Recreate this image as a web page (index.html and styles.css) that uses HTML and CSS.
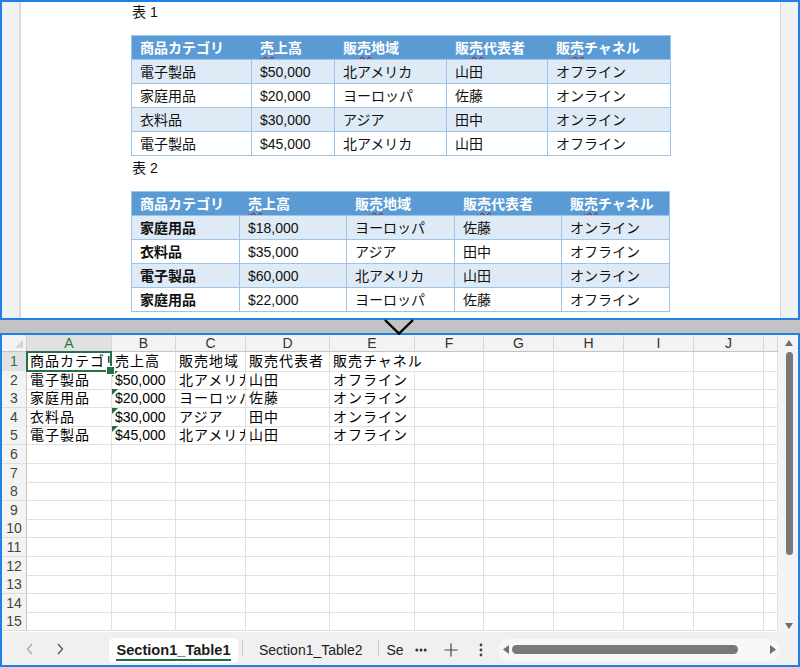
FILE: index.html
```html
<!DOCTYPE html>
<html lang="ja">
<head>
<meta charset="utf-8">
<title>表</title>
<link rel="stylesheet" href="styles.css">
</head>
<body>
<div class="app">
  <section class="doc-pane">
    <div class="gutter"></div>
    <div class="page">
      <p class="caption first">表 1</p>
      <table class="doc-table">
        <colgroup><col class="w120"><col class="w83"><col class="w112"><col class="w101"><col class="w122"></colgroup>
        <thead>
          <tr><th>商品カテゴリ</th><th><span class="sq">売</span>上高</th><th>販<span class="sq">売</span>地域</th><th>販<span class="sq">売</span>代表者</th><th>販<span class="sq">売</span>チャネル</th></tr>
        </thead>
        <tbody>
          <tr class="band"><td>電子製品</td><td>$50,000</td><td>北アメリカ</td><td>山田</td><td>オフライン</td></tr>
          <tr><td>家庭用品</td><td>$20,000</td><td>ヨーロッパ</td><td>佐藤</td><td>オンライン</td></tr>
          <tr class="band"><td>衣料品</td><td>$30,000</td><td>アジア</td><td>田中</td><td>オンライン</td></tr>
          <tr><td>電子製品</td><td>$45,000</td><td>北アメリカ</td><td>山田</td><td>オフライン</td></tr>
        </tbody>
      </table>
      <p class="caption">表 2</p>
      <table class="doc-table bold-first">
        <colgroup><col class="w108"><col class="w107"><col class="w108"><col class="w107"><col class="w107"></colgroup>
        <thead>
          <tr><th>商品カテゴリ</th><th><span class="sq">売</span>上高</th><th>販<span class="sq">売</span>地域</th><th>販<span class="sq">売</span>代表者</th><th>販<span class="sq">売</span>チャネル</th></tr>
        </thead>
        <tbody>
          <tr class="band"><td>家庭用品</td><td>$18,000</td><td>ヨーロッパ</td><td>佐藤</td><td>オンライン</td></tr>
          <tr><td>衣料品</td><td>$35,000</td><td>アジア</td><td>田中</td><td>オフライン</td></tr>
          <tr class="band"><td>電子製品</td><td>$60,000</td><td>北アメリカ</td><td>山田</td><td>オンライン</td></tr>
          <tr><td>家庭用品</td><td>$22,000</td><td>ヨーロッパ</td><td>佐藤</td><td>オフライン</td></tr>
        </tbody>
      </table>
    </div>
    <div class="rail"></div>
  </section>

  <div class="splitter">
    <svg class="chevron" width="32" height="18" viewBox="0 0 32 18"><path d="M2 2 L16 15.5 L30 2" fill="none" stroke="#000" stroke-width="2.4"/></svg>
  </div>

  <section class="sheet-pane">
    <div class="sheet-body">
      <div class="grid">
        <div class="row head">
          <div class="corner"></div>
          <div class="ch sel">A</div><div class="ch">B</div><div class="ch">C</div><div class="ch">D</div><div class="ch">E</div><div class="ch">F</div><div class="ch">G</div><div class="ch">H</div><div class="ch">I</div><div class="ch">J</div><div class="ch"></div>
        </div>
        <div class="row">
          <div class="rh sel">1</div>
          <div class="c a1 jp"><span class="clip">商品カテゴリ</span></div><div class="c jp">売上高</div><div class="c jp">販売地域</div><div class="c jp">販売代表者</div><div class="c jp over">販売チャネル</div><div class="c"></div><div class="c"></div><div class="c"></div><div class="c"></div><div class="c"></div><div class="c"></div>
        </div>
        <div class="row">
          <div class="rh">2</div>
          <div class="c jp">電子製品</div><div class="c num">$50,000</div><div class="c jp">北アメリカ</div><div class="c jp">山田</div><div class="c jp">オフライン</div><div class="c"></div><div class="c"></div><div class="c"></div><div class="c"></div><div class="c"></div><div class="c"></div>
        </div>
        <div class="row">
          <div class="rh">3</div>
          <div class="c jp">家庭用品</div><div class="c num">$20,000</div><div class="c jp">ヨーロッパ</div><div class="c jp">佐藤</div><div class="c jp">オンライン</div><div class="c"></div><div class="c"></div><div class="c"></div><div class="c"></div><div class="c"></div><div class="c"></div>
        </div>
        <div class="row">
          <div class="rh">4</div>
          <div class="c jp">衣料品</div><div class="c num">$30,000</div><div class="c jp">アジア</div><div class="c jp">田中</div><div class="c jp">オンライン</div><div class="c"></div><div class="c"></div><div class="c"></div><div class="c"></div><div class="c"></div><div class="c"></div>
        </div>
        <div class="row">
          <div class="rh">5</div>
          <div class="c jp">電子製品</div><div class="c num">$45,000</div><div class="c jp">北アメリカ</div><div class="c jp">山田</div><div class="c jp">オフライン</div><div class="c"></div><div class="c"></div><div class="c"></div><div class="c"></div><div class="c"></div><div class="c"></div>
        </div>
        <div class="row"><div class="rh">6</div><div class="c"></div><div class="c"></div><div class="c"></div><div class="c"></div><div class="c"></div><div class="c"></div><div class="c"></div><div class="c"></div><div class="c"></div><div class="c"></div><div class="c"></div></div>
        <div class="row"><div class="rh">7</div><div class="c"></div><div class="c"></div><div class="c"></div><div class="c"></div><div class="c"></div><div class="c"></div><div class="c"></div><div class="c"></div><div class="c"></div><div class="c"></div><div class="c"></div></div>
        <div class="row"><div class="rh">8</div><div class="c"></div><div class="c"></div><div class="c"></div><div class="c"></div><div class="c"></div><div class="c"></div><div class="c"></div><div class="c"></div><div class="c"></div><div class="c"></div><div class="c"></div></div>
        <div class="row"><div class="rh">9</div><div class="c"></div><div class="c"></div><div class="c"></div><div class="c"></div><div class="c"></div><div class="c"></div><div class="c"></div><div class="c"></div><div class="c"></div><div class="c"></div><div class="c"></div></div>
        <div class="row"><div class="rh">10</div><div class="c"></div><div class="c"></div><div class="c"></div><div class="c"></div><div class="c"></div><div class="c"></div><div class="c"></div><div class="c"></div><div class="c"></div><div class="c"></div><div class="c"></div></div>
        <div class="row"><div class="rh">11</div><div class="c"></div><div class="c"></div><div class="c"></div><div class="c"></div><div class="c"></div><div class="c"></div><div class="c"></div><div class="c"></div><div class="c"></div><div class="c"></div><div class="c"></div></div>
        <div class="row"><div class="rh">12</div><div class="c"></div><div class="c"></div><div class="c"></div><div class="c"></div><div class="c"></div><div class="c"></div><div class="c"></div><div class="c"></div><div class="c"></div><div class="c"></div><div class="c"></div></div>
        <div class="row"><div class="rh">13</div><div class="c"></div><div class="c"></div><div class="c"></div><div class="c"></div><div class="c"></div><div class="c"></div><div class="c"></div><div class="c"></div><div class="c"></div><div class="c"></div><div class="c"></div></div>
        <div class="row"><div class="rh">14</div><div class="c"></div><div class="c"></div><div class="c"></div><div class="c"></div><div class="c"></div><div class="c"></div><div class="c"></div><div class="c"></div><div class="c"></div><div class="c"></div><div class="c"></div></div>
        <div class="row"><div class="rh">15</div><div class="c"></div><div class="c"></div><div class="c"></div><div class="c"></div><div class="c"></div><div class="c"></div><div class="c"></div><div class="c"></div><div class="c"></div><div class="c"></div><div class="c"></div></div>
      </div>
      <div class="vscroll">
        <svg class="arrow-up" width="8" height="6" viewBox="0 0 8 6"><path d="M4 0 L8 6 L0 6 Z" fill="#6e6e6e"/></svg>
        <div class="vthumb"></div>
        <svg class="arrow-down" width="8" height="6" viewBox="0 0 8 6"><path d="M0 0 L8 0 L4 6 Z" fill="#6e6e6e"/></svg>
      </div>
    </div>

    <div class="tabbar">
      <div class="nav">
        <svg class="nav-btn" width="8" height="12" viewBox="0 0 8 12"><path d="M6 1 L1.5 6 L6 11" fill="none" stroke="#a8a8a8" stroke-width="1.3"/></svg>
        <svg class="nav-btn" width="8" height="12" viewBox="0 0 8 12"><path d="M2 1 L6.5 6 L2 11" fill="none" stroke="#555" stroke-width="1.3"/></svg>
      </div>
      <div class="tab active"><span class="tab-label">Section1_Table1</span></div>
      <div class="tabs-rest">
        <span class="tab-sep"></span>
        <span class="tab">Section1_Table2</span>
        <span class="tab-sep"></span>
        <span class="tab tab-cut">Section1_Table3</span>
      </div>
      <div class="tool tool-more">
        <svg width="12" height="4" viewBox="0 0 12 4"><circle cx="1.8" cy="2" r="1.5" fill="#333"/><circle cx="6" cy="2" r="1.5" fill="#333"/><circle cx="10.2" cy="2" r="1.5" fill="#333"/></svg>
      </div>
      <div class="tool tool-add">
        <svg width="14" height="14" viewBox="0 0 14 14"><path d="M7 0.5 V13.5 M0.5 7 H13.5" stroke="#444" stroke-width="1.2"/></svg>
      </div>
      <div class="tool tool-menu">
        <svg width="4" height="14" viewBox="0 0 4 14"><circle cx="2" cy="2" r="1.4" fill="#444"/><circle cx="2" cy="7" r="1.4" fill="#444"/><circle cx="2" cy="12" r="1.4" fill="#444"/></svg>
      </div>
      <div class="hscroll">
        <svg width="6" height="9" viewBox="0 0 6 9"><path d="M6 0 L6 9 L0 4.5 Z" fill="#6e6e6e"/></svg>
        <div class="hthumb"></div>
        <svg width="6" height="9" viewBox="0 0 6 9"><path d="M0 0 L6 4.5 L0 9 Z" fill="#6e6e6e"/></svg>
      </div>
    </div>
  </section>
</div>
</body>
</html>
```

FILE: styles.css
```css
* { box-sizing: border-box; }
html, body { margin: 0; padding: 0; }
body {
  width: 800px;
  height: 667px;
  overflow: hidden;
  background: #fff;
  font-family: "Liberation Sans", "Noto Sans CJK JP", sans-serif;
  color: #000;
}
.app { display: flex; flex-direction: column; height: 667px; }

/* ---------- document pane ---------- */
.doc-pane {
  height: 320px;
  flex: none;
  border: 2px solid #1f80e6;
  display: flex;
  overflow: hidden;
}
.gutter { width: 19px; flex: none; background: #f0f0f0; border-right: 2px solid #d9d9d9; }
.page { flex: 1; background: #fff; padding-left: 110px; }
.rail { width: 18px; flex: none; background: #f0f0f0; border-left: 1px solid #d6d6d6; }

.caption {
  margin: 2px 0 0 1px;
  font-size: 14px;
  line-height: 20px;
  color: #111;
}
.caption.first { margin-top: 0; }

.doc-table {
  margin-top: 13px;
  border-collapse: separate;
  border-spacing: 0;
  table-layout: fixed;
  border: 1px solid #9dc3e6;
  font-size: 14px;
}
.doc-table th, .doc-table td {
  padding: 0 0 0 8px;
  text-align: left;
  white-space: nowrap;
  overflow: hidden;
  line-height: 20px;
}
.doc-table th {
  height: 24px;
  background: #5b9bd5;
  color: #fff;
  font-weight: bold;
  border-bottom: 1px solid #9dc3e6;
}
.doc-table td {
  height: 24px;
  border-right: 1px solid #9dc3e6;
  border-bottom: 1px solid #9dc3e6;
  color: #111;
}
.doc-table td:last-child { border-right: none; }
.doc-table tbody tr:last-child td { border-bottom: none; height: 23px; }
.doc-table tr.band td { background: #deeaf6; }
.bold-first td:first-child { font-weight: bold; }
.sq {
  text-decoration: underline wavy #c00000;
  text-decoration-thickness: 1px;
  text-underline-offset: 3px;
}
.w120 { width: 120px; }
.w83 { width: 83px; }
.w112 { width: 112px; }
.w101 { width: 101px; }
.w122 { width: 122px; }
.w108 { width: 108px; }
.w107 { width: 107px; }

/* ---------- splitter ---------- */
.splitter {
  height: 13px;
  flex: none;
  background: #c3c3c3;
  position: relative;
}
.chevron {
  position: absolute;
  left: 383px;
  top: -2px;
  z-index: 2;
}

/* ---------- sheet pane ---------- */
.sheet-pane {
  height: 334px;
  flex: none;
  border: 2px solid #1f80e6;
  display: flex;
  flex-direction: column;
  background: #fff;
}
.sheet-body { display: flex; height: 297px; flex: none; }
.grid { width: 776px; flex: none; display: flex; flex-direction: column; }
.row {
  display: grid;
  grid-template-columns: 25px 85px 64px 70px 84px 85px 69px 70px 70px 70px 70px 14px;
  height: 18.6px;
}
.row.head { height: 17px; }

.corner {
  background: #f3f3f3;
  border-right: 1px solid #d0d0d0;
  border-bottom: 1px solid #c4c4c4;
  position: relative;
}
.corner::after {
  content: "";
  position: absolute;
  right: 3px;
  bottom: 3px;
  border-left: 8px solid transparent;
  border-bottom: 8px solid #d4d4d4;
}
.ch {
  background: #f3f3f3;
  border-right: 1px solid #d6d6d6;
  border-bottom: 1px solid #c4c4c4;
  font-size: 14px;
  line-height: 16px;
  text-align: center;
  color: #333;
}
.ch.sel { background: #e1e1e1; color: #217346; border-bottom-color: #c4c4c4; }

.rh {
  background: #f3f3f3;
  border-right: 1px solid #c8c8c8;
  border-bottom: 1px solid #dcdcdc;
  font-size: 14px;
  line-height: 18px;
  text-align: center;
  color: #444;
}
.rh.sel { background: #e1e1e1; color: #217346; }

.c {
  border-right: 1px solid #e1e1e1;
  border-bottom: 1px solid #e1e1e1;
  font-size: 14px;
  line-height: 19px;
  padding: 0 0 0 3px;
  white-space: nowrap;
  overflow: hidden;
  color: #000;
}
.c.jp { letter-spacing: 1px; }
.c.over { overflow: visible; border-right-color: transparent; }
.c.num { position: relative; }
.c.num::before {
  content: "";
  position: absolute;
  top: 0;
  left: 0;
  border-top: 6px solid #1e7145;
  border-right: 6px solid transparent;
}
.a1 { position: relative; overflow: visible; }
.a1 .clip { display: block; overflow: hidden; }
.a1::after {
  content: "";
  position: absolute;
  left: -1px;
  top: -1px;
  right: -1px;
  bottom: -1px;
  border: 2px solid #217346;
  z-index: 2;
}
.a1::before {
  content: "";
  position: absolute;
  right: -4px;
  bottom: -4px;
  width: 7px;
  height: 7px;
  background: #217346;
  border: 1px solid #fff;
  z-index: 3;
}

.vscroll {
  width: 20px;
  flex: none;
  background: #f3f3f3;
  display: flex;
  flex-direction: column;
  align-items: center;
  padding: 5px 0 3px 2px;
}
.arrow-up { flex: none; }
.vthumb {
  width: 7px;
  height: 203px;
  margin-top: 6px;
  background: #787878;
  border-radius: 4px;
}
.arrow-down { flex: none; margin-top: auto; }

/* ---------- tab bar ---------- */
.tabbar {
  height: 33px;
  flex: none;
  background: #f0f0f0;
  display: flex;
  align-items: center;
  font-size: 14px;
  color: #222;
}
.nav { width: 107px; flex: none; display: flex; align-items: center; padding-left: 24px; gap: 22px; }
.nav-btn { flex: none; }
.tab.active {
  width: 129px;
  height: 25px;
  flex: none;
  margin-top: 3px;
  background: #fff;
  border-radius: 4px;
  display: flex;
  justify-content: center;
  align-items: center;
  box-shadow: 0 0 1px rgba(0,0,0,0.08);
}
.tab-label {
  font-size: 14.6px;
  font-weight: bold;
  line-height: 16px;
  color: #1b1b1b;
  border-bottom: 2px solid #1e7145;
  padding-bottom: 1px;
  margin-top: 2px;
}
.tabs-rest {
  width: 166px;
  flex: none;
  display: flex;
  align-items: center;
  overflow: hidden;
  white-space: nowrap;
  padding-left: 4px;
}
.tab-sep { width: 1px; height: 17px; background: #c8c8c8; flex: none; }
.tabs-rest .tab { padding: 0 15px 0 16px; line-height: 18px; margin-top: 3px; color: #222; }
.tabs-rest .tab-cut { padding-left: 8px; }
.tool { flex: none; display: flex; justify-content: center; align-items: center; margin-top: 2px; }
.tool-more { width: 34px; }
.tool-add { width: 26px; }
.tool-menu { width: 34px; }
.hscroll {
  width: 282px;
  flex: none;
  height: 22px;
  margin-top: 2px;
  background: #f7f7f7;
  border-radius: 11px;
  display: flex;
  align-items: center;
  padding: 0 4px 0 5px;
}
.hthumb {
  width: 226px;
  height: 9px;
  margin-left: 3px;
  background: #787878;
  border-radius: 5px;
}
.hscroll svg:last-child { margin-left: auto; }
```
